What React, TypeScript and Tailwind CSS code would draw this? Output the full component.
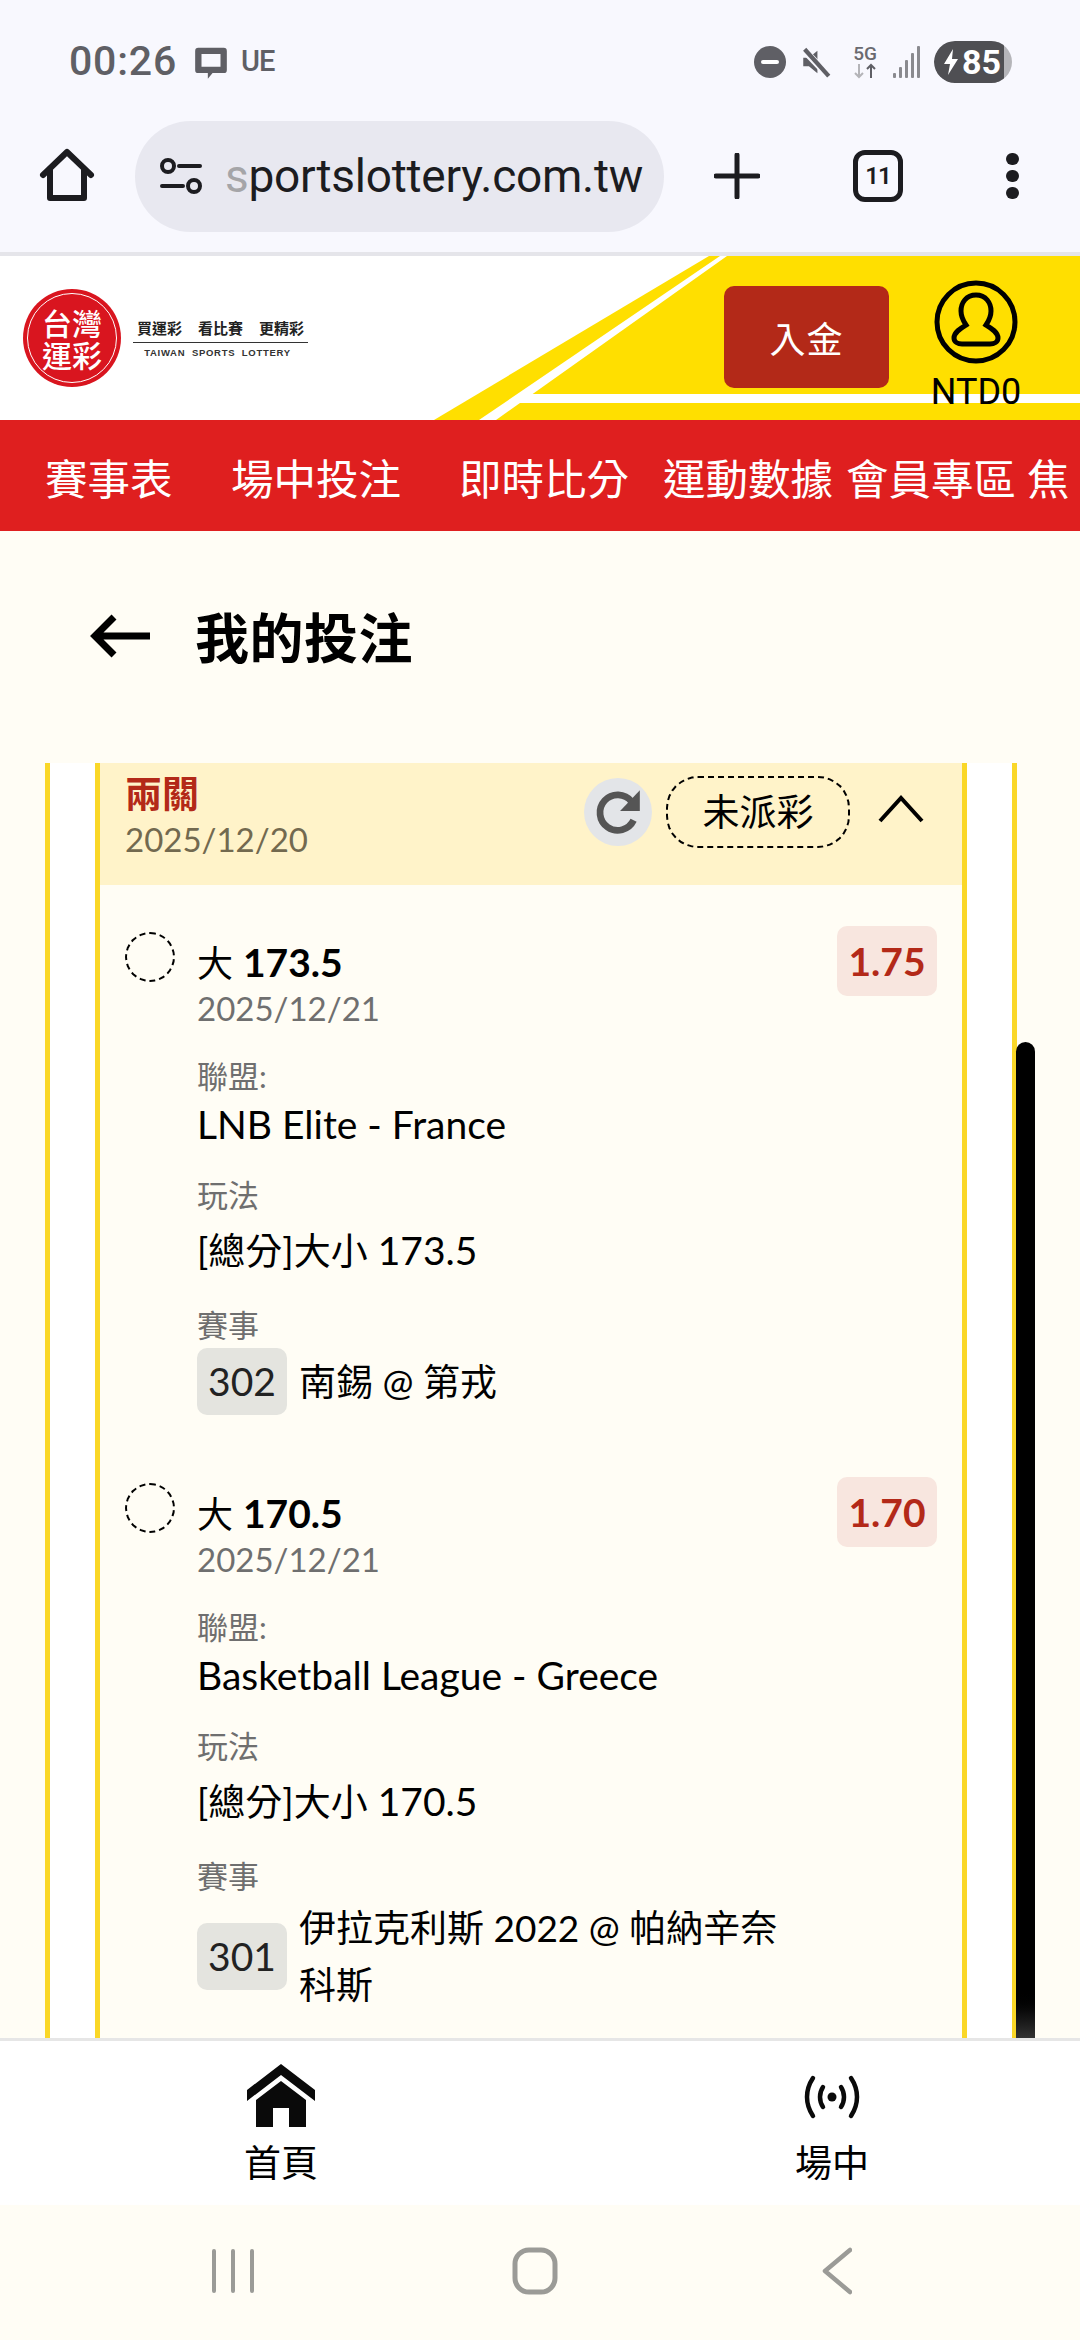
const cjk = "font-['Lato','Noto_Sans_CJK_TC',sans-serif]";

function StatusBar() {
  return (
    <div className="h-[100px] flex items-center justify-between pl-[69px] pr-[68px] pt-[24px]">
      <div className="flex items-center text-[#5f5f65]">
        <span className="font-['Roboto',sans-serif] text-[41px] font-medium tracking-[0.8px]">00:26</span>
        <svg width="38" height="38" viewBox="0 0 24 24" className="ml-[15px]" fill="#5f5f65">
          <path d="M4 3h16a2 2 0 0 1 2 2v12a2 2 0 0 1-2 2h-7l-3 3.5V19H4a2 2 0 0 1-2-2V5a2 2 0 0 1 2-2zm2 4v8h12V7z" />
        </svg>
        <span className="ml-[11px] font-['Roboto',sans-serif] text-[29px] font-medium tracking-[-1px]">UE</span>
      </div>
      <div className="flex items-center">
        <div className="w-[32px] h-[32px] rounded-full bg-[#5f5f65] flex items-center justify-center">
          <div className="w-[18px] h-[4px] bg-white rounded-sm" />
        </div>
        <svg width="34" height="36" viewBox="0 0 24 24" className="ml-[13px]" fill="#5f5f65">
          <path d="M3 9h4l6-5v16l-6-5H3z" />
          <path d="M3 3l18 19" stroke="#f8f8fe" strokeWidth="5" />
          <path d="M4 3l17 19" stroke="#5f5f65" strokeWidth="3" />
        </svg>
        <div className="ml-[18px] w-[28px] flex flex-col items-center leading-none text-[#6a6a70]">
          <span className="font-['Roboto',sans-serif] text-[19px] font-medium leading-[18px]">5G</span>
          <svg width="26" height="16" viewBox="0 0 26 16" fill="none" strokeWidth="2">
            <path d="M7 1v13M3 10l4 4 4-4" stroke="#b4b4b8" />
            <path d="M19 15V2M15 6l4-4 4 4" stroke="#5f5f65" />
          </svg>
        </div>
        <svg width="30" height="34" viewBox="0 0 30 34" className="ml-[13px]" fill="#8a8a8f">
          <rect x="1" y="28" width="3" height="5" rx="1" />
          <rect x="7" y="22" width="3" height="11" rx="1" />
          <rect x="13" y="15" width="3" height="18" rx="1" />
          <rect x="19" y="8" width="3" height="25" rx="1" />
          <rect x="25" y="1" width="3" height="32" rx="1" />
        </svg>
        <div className="ml-[12px] relative w-[78px] h-[42px] rounded-full bg-[#b5b5b9] overflow-hidden">
          <div className="absolute left-0 top-0 bottom-0 w-[70px] bg-[#4f4f53] rounded-l-full flex items-center">
            <svg width="18" height="28" viewBox="0 0 18 28" className="ml-[8px]" fill="#fff">
              <path d="M11 1L2 16h6l-2 11 10-16h-6z" />
            </svg>
            <span className="ml-[2px] font-['Roboto',sans-serif] text-[34px] font-bold text-white leading-none">85</span>
          </div>
        </div>
      </div>
    </div>
  );
}

function BrowserBar() {
  return (
    <div className="h-[152px] flex items-center relative">
      <svg width="56" height="56" viewBox="0 0 56 56" className="ml-[39px]" fill="none" stroke="#1c1c20" strokeWidth="6" strokeLinejoin="round">
        <path d="M4 27L28 4l24 23M11 22v28h34V22" strokeLinecap="round" />
      </svg>
      <div className="ml-[40px] w-[529px] h-[111px] rounded-full bg-[#e8e8f0] flex items-center">
        <svg width="42" height="36" viewBox="0 0 42 36" className="ml-[25px]" fill="none" stroke="#1c1c20" strokeWidth="4">
          <circle cx="8" cy="8" r="6" />
          <path d="M19 8h21M2 28h21" strokeLinecap="round" />
          <circle cx="34" cy="28" r="6" />
        </svg>
        <span className="ml-[23px] font-['Roboto',sans-serif] text-[46px] leading-none text-[#1c1c20] tracking-[-0.25px]">
          <span className="text-[#a5a5a8]">s</span>portslottery.com.tw
        </span>
      </div>
      <svg width="46" height="46" viewBox="0 0 46 46" className="ml-[50px]" stroke="#1c1c20" strokeWidth="5" strokeLinecap="round">
        <path d="M23 2v42M2 23h42" />
      </svg>
      <div className="ml-[93px] w-[50px] h-[52px] rounded-[12px] border-[5px] border-[#1c1c20] flex items-center justify-center font-['Roboto',sans-serif] text-[24px] font-semibold tracking-[-1px] text-[#1c1c20]">
        11
      </div>
      <div className="ml-[103px] flex flex-col gap-[5px]">
        <div className="w-[13px] h-[12px] rounded-full bg-[#1c1c20]" />
        <div className="w-[13px] h-[12px] rounded-full bg-[#1c1c20]" />
        <div className="w-[13px] h-[12px] rounded-full bg-[#1c1c20]" />
      </div>
    </div>
  );
}

function Logo() {
  return (
    <div className="flex items-center ml-[23px]">
      <div className="w-[98px] h-[98px] rounded-full bg-[#d9151f] flex items-center justify-center">
        <div className="w-[90px] h-[90px] rounded-full border border-white flex items-center justify-center">
          <div className="w-[62px] text-white text-[30px] leading-[32px] font-medium text-center font-['Noto_Sans_CJK_TC',sans-serif]">台灣運彩</div>
        </div>
      </div>
      <div className="ml-[12px] w-[175px] flex flex-col items-center">
        <div className="w-full flex justify-between px-[4px] text-[15px] leading-[24px] font-bold text-[#222] font-['Noto_Sans_CJK_TC',sans-serif]">
          <span>買運彩</span>
          <span>看比賽</span>
          <span>更精彩</span>
        </div>
        <div className="w-full h-px bg-[#333] mt-[2px]" />
        <div className="mt-[3px] -ml-[6px] font-['Liberation_Sans',sans-serif] font-bold text-[9.5px] leading-[14px] tracking-[0.7px] whitespace-nowrap text-[#333]">
          TAIWAN&nbsp; SPORTS&nbsp; LOTTERY
        </div>
      </div>
    </div>
  );
}

function SiteHeader() {
  return (
    <div className="h-[164px] bg-white relative overflow-hidden flex items-center">
      <svg width="646" height="164" viewBox="0 0 646 164" className="absolute right-0 top-0">
        <polygon points="0,164 275,0 646,0 646,164" fill="#ffdf00" />
        <polygon points="45,164 286,0 293,0 62,164" fill="#fff" />
        <polygon points="92,138 646,138 646,147 80,147" fill="#fff" />
      </svg>
      <Logo />
      <div className="absolute left-[724px] top-[30px] w-[165px] h-[102px] rounded-[10px] bg-[#b32918] flex items-center justify-center text-white text-[36px] tracking-[1px] font-['Noto_Sans_CJK_TC',sans-serif]">
        入金
      </div>
      <div className="absolute left-[920px] top-[24px] w-[112px] flex flex-col items-center">
        <svg width="84" height="84" viewBox="0 0 84 84" fill="none" stroke="#000" strokeWidth="5">
          <circle cx="42" cy="42" r="39" />
          <path d="M42 15c-10 0-15 8-15 16 0 6 3 11 5 14-5 3-12 7-12 13 0 4 4 6 8 6h28c4 0 8-2 8-6 0-6-7-10-12-13 2-3 5-8 5-14 0-8-5-16-15-16z" />
        </svg>
        <span className="mt-[9px] font-['Roboto',sans-serif] text-[36px] leading-[38px] text-black">NTD0</span>
      </div>
    </div>
  );
}

function MainNav() {
  const items: [string, string][] = [
    ["賽事表", "w-[231px] pl-[45px]"],
    ["場中投注", "w-[228px]"],
    ["即時比分", "w-[204px]"],
    ["運動數據", "w-[183px]"],
    ["會員專區", "w-[181px]"],
    ["焦", "w-[53px]"],
  ];
  return (
    <div className="h-[111px] bg-[#df1f1f] flex items-center pt-[2px] overflow-hidden whitespace-nowrap text-white text-[42.5px] font-['Noto_Sans_CJK_TC',sans-serif]">
      {items.map(([label, cls]) => (
        <div key={label} className={`shrink-0 ${cls}`}>{label}</div>
      ))}
    </div>
  );
}

function Leg({ title, date, odds, league, play, no, match }: { title: string; date: string; odds: string; league: string; play: string; no: string; match: React.ReactNode }) {
  return (
    <div className="flex pl-[25px] pr-[25px]">
      <div className="w-[50px] h-[50px] rounded-full border-2 border-dashed border-black mt-[3px] shrink-0" />
      <div className="ml-[22px] flex-1">
        <div className="flex justify-between">
          <div className="pt-[10px]">
            <div className="text-[39px] leading-[46px] text-black">
              <span className="text-[36px]">大</span> <span className="font-bold">{title}</span>
            </div>
            <div className="text-[33px] leading-[44px] text-[#6f6f6f]">{date}</div>
          </div>
          <div className="w-[100px] h-[70px] -mt-[3px] rounded-[10px] bg-[#f8e6df] flex items-center justify-center text-[39px] font-bold text-[#b32918]">{odds}</div>
        </div>
        <div className="mt-[28px] text-[31px] leading-[36px] text-[#6f6f6f]">聯盟:</div>
        <div className="mt-[6px] text-[39px] leading-[48px] text-black">{league}</div>
        <div className="mt-[29px] text-[31px] leading-[36px] text-[#6f6f6f]">玩法</div>
        <div className="mt-[13px] text-[39px] leading-[48px] text-black">
          <span className="text-[37px]">[總分]大小</span> {play}
        </div>
        <div className="mt-[32px] text-[31px] leading-[36px] text-[#6f6f6f]">賽事</div>
        <div className="mt-[5px] flex items-center">
          <div className="w-[90px] h-[67px] rounded-[10px] bg-[#e4e4df] flex items-center justify-center text-[39px] text-[#222] shrink-0">{no}</div>
          <div className="ml-[12px] text-[37px] leading-[57px] text-black w-[490px]">{match}</div>
        </div>
      </div>
    </div>
  );
}

function BetCard() {
  return (
    <div className="relative flex-1 min-h-0 overflow-hidden">
      <div className="ml-[45px] mr-[63px] h-full bg-white border-x-[5px] border-[#fad727] px-[45px]">
        <div className="h-full bg-[#fffdf5] border-x-[5px] border-[#fad727]">
          <div className="h-[122px] bg-[#fff3c9] flex pl-[25px] pr-[38px]">
            <div className="pt-[8px]">
              <div className="text-[37px] leading-[46px] font-bold text-[#b32918]">兩關</div>
              <div className="text-[33px] leading-[44px] text-[#72694f]">2025/12/20</div>
            </div>
            <div className="ml-auto flex items-center self-start mt-[13px]">
              <div className="w-[68px] h-[68px] rounded-full bg-[#e3e5e8] flex items-center justify-center">
                <svg width="52" height="52" viewBox="0 0 50 50" fill="none">
                  <path d="M40 33a17 17 0 1 1-2-18" stroke="#555" strokeWidth="6.5" />
                  <path d="M46 4v20H27z" fill="#555" />
                </svg>
              </div>
              <div className="ml-[14px] w-[184px] h-[72px] rounded-[32px] border-2 border-dashed border-black flex items-center justify-center text-[37px] text-black">未派彩</div>
              <svg width="46" height="30" viewBox="0 0 46 30" className="ml-[28px] -mt-[6px]" fill="none" stroke="#000" strokeWidth="4">
                <path d="M2 27L23 4l21 23" />
              </svg>
            </div>
          </div>
          <div className="pt-[44px] flex flex-col gap-[65px]">
            <Leg title="173.5" date="2025/12/21" odds="1.75" league="LNB Elite - France" play="173.5" no="302" match="南錫 @ 第戎" />
            <Leg title="170.5" date="2025/12/21" odds="1.70" league="Basketball League - Greece" play="170.5" no="301" match="伊拉克利斯 2022 @ 帕納辛奈科斯" />
          </div>
        </div>
      </div>
      <div className="absolute left-[1016px] top-[279px] bottom-0 w-[19px] rounded-t-full bg-gradient-to-b from-black from-95% to-[#333]" />
    </div>
  );
}

function BottomTabs() {
  return (
    <div className="h-[167px] bg-white border-t-[3px] border-[#e6e6e6] flex">
      <div className="w-[562px] flex flex-col items-center pt-[23px]">
        <svg width="68" height="63" viewBox="0 0 68 63" fill="#0a0a0a">
          <path d="M34 0L68 26v11L34 11 0 37V26z" />
          <path d="M34 17L59 36v27H42V44H26v19H9V36z" />
        </svg>
        <div className="mt-[12px] text-[37px] leading-[44px] text-black font-['Noto_Sans_CJK_TC',sans-serif]">首頁</div>
      </div>
      <div className="w-[518px] flex flex-col items-center pt-[23px] pl-[22px]">
        <svg width="68" height="63" viewBox="0 0 68 63" fill="none" stroke="#0a0a0a" strokeWidth="4.5" strokeLinecap="round">
          <circle cx="34" cy="33" r="4.5" fill="#0a0a0a" stroke="none" />
          <path d="M25 23c-4 6-4 14 0 20M43 23c4 6 4 14 0 20M15 14c-8 12-8 26 0 38M53 14c8 12 8 26 0 38" />
        </svg>
        <div className="mt-[12px] text-[37px] leading-[44px] text-black font-['Noto_Sans_CJK_TC',sans-serif]">場中</div>
      </div>
    </div>
  );
}

function SystemNav() {
  return (
    <div className="h-[135px] bg-[#fffdf5] relative flex items-center pb-[4px]">
      <svg width="44" height="46" viewBox="0 0 44 46" className="ml-[211px]" stroke="#9b9b97" strokeWidth="4" strokeLinecap="round">
        <path d="M3 3v40M22 3v40M41 3v40" />
      </svg>
      <svg width="46" height="48" viewBox="0 0 46 48" className="ml-[257px]" fill="none" stroke="#9b9b97" strokeWidth="5">
        <rect x="3" y="3" width="40" height="42" rx="14" />
      </svg>
      <svg width="30" height="48" viewBox="0 0 30 48" className="ml-[264px]" fill="none" stroke="#9b9b97" strokeWidth="4.5" strokeLinecap="round" strokeLinejoin="round">
        <path d="M28 3L3 24l25 21" />
      </svg>
    </div>
  );
}

export default function App() {
  return (
    <div className={`w-[1080px] h-[2340px] overflow-hidden flex flex-col bg-[#f8f8fe] ${cjk}`}>
      <StatusBar />
      <BrowserBar />
      <div className="h-[4px] bg-[#e5e5ea]" />
      <SiteHeader />
      <MainNav />
      <div className="flex-1 min-h-0 flex flex-col bg-[#fffdf5]">
        <div className="h-[232px] flex items-center shrink-0">
          <svg width="62" height="44" viewBox="0 0 62 44" className="ml-[90px] -mt-[22px]" fill="none" stroke="#000" strokeWidth="7">
            <path d="M60 22H6M24 3L5 22l19 19" />
          </svg>
          <h1 className="ml-[43px] -mt-[24px] text-[54px] font-bold text-black tracking-[0.5px] font-['Noto_Sans_CJK_TC',sans-serif]">我的投注</h1>
        </div>
        <BetCard />
        <BottomTabs />
        <SystemNav />
      </div>
    </div>
  );
}
